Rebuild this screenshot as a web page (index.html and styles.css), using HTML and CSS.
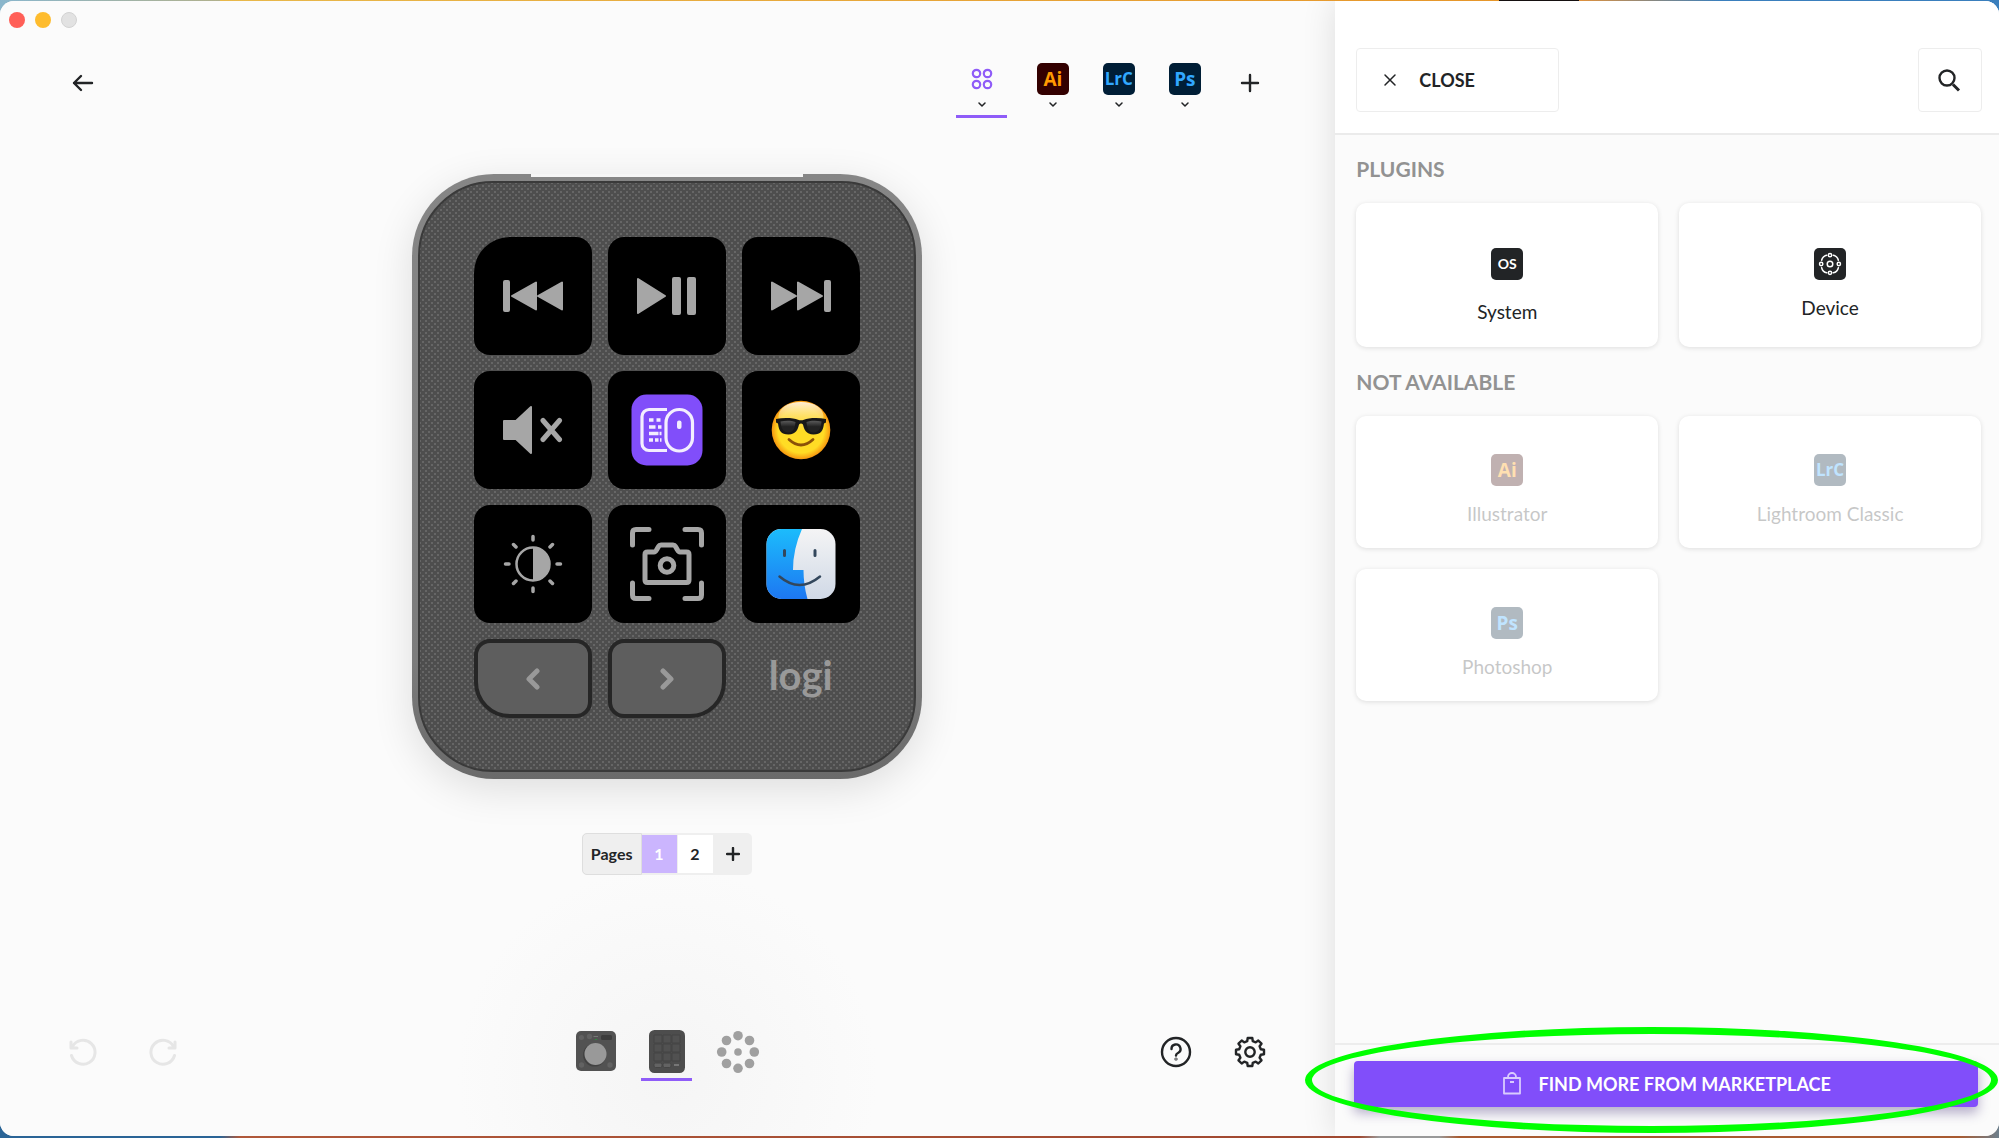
FILE: index.html
```
<!DOCTYPE html>
<html lang="en">
  <head>
    <meta charset="UTF-8" />
    <meta name="viewport" content="width=device-width, initial-scale=1.0" />
    <title>Logi Options+</title>
    <link rel="stylesheet" href="styles.css">
  </head>
  <body>
    <div class="window">
      <main class="main">
        <div class="titlebar">
          <button class="light red" aria-label="Close window"></button>
          <button class="light yellow" aria-label="Minimize window"></button>
          <button class="light grey" aria-label="Zoom window" disabled></button>
        </div>

        <div class="topbar">
          <button class="icon-btn" aria-label="Back">
            <svg width="22" height="18" viewBox="0 0 22 18" class="line"><path d="M20 9H2M9 2L2 9l7 7" /></svg>
          </button>
          <nav class="tabs">
            <button class="tab active" aria-label="All apps">
              <span class="tab-icon">
                <svg width="22" height="22" viewBox="0 0 22 22" class="line purple"><circle cx="5.5" cy="5.5" r="3.7" /><circle cx="16.5" cy="5.5" r="3.7" /><circle cx="5.5" cy="16.5" r="3.7" /><circle cx="16.5" cy="16.5" r="3.7" /></svg>
              </span>
              <svg width="8" height="6" viewBox="0 0 8 6" class="line thin"><path d="M1 1l3 3 3-3" /></svg>
            </button>
            <button class="tab">
              <span class="app ai">Ai</span>
              <svg width="8" height="6" viewBox="0 0 8 6" class="line thin"><path d="M1 1l3 3 3-3" /></svg>
            </button>
            <button class="tab">
              <span class="app lrc">LrC</span>
              <svg width="8" height="6" viewBox="0 0 8 6" class="line thin"><path d="M1 1l3 3 3-3" /></svg>
            </button>
            <button class="tab">
              <span class="app ps">Ps</span>
              <svg width="8" height="6" viewBox="0 0 8 6" class="line thin"><path d="M1 1l3 3 3-3" /></svg>
            </button>
            <button class="icon-btn add" aria-label="Add app">
              <svg width="20" height="20" viewBox="0 0 20 20" class="line"><path d="M10 2v16M2 10h16" /></svg>
            </button>
          </nav>
        </div>

        <div class="device">
          <div class="keypad">
            <button class="key top-left" aria-label="Previous track">
              <svg width="60" height="60" viewBox="-30 -30 60 60" class="media"><rect x="-29" y="-15" width="5" height="30" rx="1" /><path d="M-21 0L3-13.5v27zM5 0l24-13.5v27z" /></svg>
            </button>
            <button class="key" aria-label="Play / pause">
              <svg width="60" height="60" viewBox="-30 -30 60 60" class="media"><path d="M-29-17L-2 0l-27 17z" /><rect x="6" y="-18" width="7" height="36" rx="1" /><rect x="21" y="-18" width="7" height="36" rx="1" /></svg>
            </button>
            <button class="key top-right" aria-label="Next track">
              <svg width="60" height="60" viewBox="-30 -30 60 60" class="media"><rect x="24" y="-15" width="5" height="30" rx="1" /><path d="M21 0L-3-13.5v27zM-5 0l-24-13.5v27z" /></svg>
            </button>

            <button class="key" aria-label="Mute">
              <svg width="60" height="60" viewBox="-30 -30 60 60" class="media"><path d="M-29-9h12L-2-23v46L-17 9h-12z" /><path class="cross" d="M10-9.5l16.500 19M26.500-9.500L10 9.500" /></svg>
            </button>
            <button class="key" aria-label="Logi Options+">
              <svg width="72" height="72" viewBox="-36 -36 72 72">
                <rect x="-35.5" y="-35.5" width="71" height="71" rx="15" fill="#814efa" />
                <g fill="none" stroke="#f3eefe" stroke-width="3.2">
                  <path d="M0-20.5h-18a7 7 0 0 0-7 7v27a7 7 0 0 0 7 7H0" />
                  <rect x="-1" y="-20.5" width="26.5" height="41.5" rx="13.2" />
                </g>
                <path stroke="#f3eefe" stroke-width="3.5" d="M-18-10h4.500M-10.500-10h4M-18-3h6.500M-9-3h3.500M-18 3.500h9.500M-7.500 3.500h2M-18 10h4M-12 10h3.500M-7 10h1.500" />
                <rect x="10" y="-9.5" width="4.5" height="8.5" rx="2" fill="#f3eefe" />
              </svg>
            </button>
            <button class="key" aria-label="Emoji">
              <svg width="60" height="60" viewBox="-30 -30 60 60">
                <defs>
                  <radialGradient id="face" cx="50%" cy="50%" r="50%"><stop offset="0.78" stop-color="#ffdc25" /><stop offset="1" stop-color="#f6960f" /></radialGradient>
                  <linearGradient id="shine" x1="0" y1="0" x2="0" y2="1"><stop offset="0" stop-color="#fff0d8" /><stop offset="1" stop-color="#fed84a" stop-opacity="0.2" /></linearGradient>
                  <linearGradient id="glass" x1="0" y1="0" x2="0" y2="1"><stop offset="0" stop-color="#595959" /><stop offset="0.5" stop-color="#222" /></linearGradient>
                </defs>
                <circle r="29.3" fill="url(#face)" />
                <ellipse cy="-14" rx="22.5" ry="14" fill="url(#shine)" />
                <path fill="#181818" d="M-25-11c8-1.500 18-1 22 .8q3 1 6 0c4-1.800 14-2.300 22-.8v3.500l-2 1C22 1 20 4.500 12.500 4.500 5 4.500 3-1 2-5.500q-2-2-4 0C-3-1-5 4.500-12.500 4.500-20 4.500-22 1-23-6.500l-2-1z" />
                <path fill="url(#glass)" d="M-20.500-8.500c5-1 11-1 15 .5C-6-2-8 2.500-12.500 2.500S-20-1-20.500-8.500zM20.500-8.500c-5-1-11-1-15 .5C6-2 8 2.500 12.500 2.500S20-1 20.500-8.500z" />
                <path fill="none" stroke="#8a5108" stroke-width="2.8" stroke-linecap="round" d="M-12 9.500Q0 20.500 12 9.500" />
              </svg>
            </button>

            <button class="key" aria-label="Brightness">
              <svg width="60" height="60" viewBox="-30 -30 60 60">
                <circle r="16.5" fill="none" stroke="#a6a6a6" stroke-width="2.5" />
                <path fill="#a6a6a6" d="M0-17a17 17 0 0 1 0 34z" />
                <path stroke="#a6a6a6" stroke-width="3.5" stroke-linecap="round" d="M0-24v-3.500M0 24v3.500M-24 0h-3.500M24 0h3.500M-17-17l-2.500-2.500M17-17l2.500-2.500M-17 17l-2.500 2.500M17 17l2.500 2.500" />
              </svg>
            </button>
            <button class="key" aria-label="Screenshot">
              <svg width="76" height="76" viewBox="-38 -38 76 76" fill="none" stroke="#a6a6a6" stroke-width="5" stroke-linecap="round" stroke-linejoin="round">
                <path d="M-34.500-19v-12q0-3.500 3.500-3.500h13M34.500-19v-12q0-3.500-3.500-3.500h-13M-34.500 19v12q0 3.500 3.500 3.500h13M34.500 19v12q0 3.500-3.500 3.500h-13" />
                <path d="M-22-9.500q0-2.500 2.500-2.500h6.500q1.500 0 2.500-2l2-3.500q.8-1.500 2.500-1.500H6q1.700 0 2.500 1.500l2 3.500q1 2 2.500 2h6.500q2.500 0 2.500 2.500V16q0 2.500-2.500 2.500h-39Q-22 18.500-22 16z" />
                <circle cy="1.5" r="6.8" />
              </svg>
            </button>
            <button class="key" aria-label="Finder">
              <svg width="70" height="70" viewBox="0 0 70 70">
                <defs>
                  <linearGradient id="blue" x1="0" y1="0" x2="0" y2="1"><stop offset="0" stop-color="#1cbcfc" /><stop offset="1" stop-color="#1d77f2" /></linearGradient>
                  <linearGradient id="silver" x1="0" y1="0" x2="0" y2="1"><stop offset="0" stop-color="#f4f4f5" /><stop offset="1" stop-color="#d0d9e6" /></linearGradient>
                  <clipPath id="tile"><rect x="0.5" width="69" height="70" rx="15" /></clipPath>
                </defs>
                <g clip-path="url(#tile)">
                  <rect width="70" height="70" fill="url(#silver)" />
                  <path fill="url(#blue)" d="M0 0h36Q27 20 27 41h10.500q0 15 4 29H0z" />
                </g>
                <g fill="none" stroke="#33475c" stroke-linecap="round">
                  <path stroke-width="3" d="M18.500 21.500v5M49 21.500v5" />
                  <path stroke-width="2.5" d="M13.500 47.500q20 17 40.500 0" />
                </g>
              </svg>
            </button>

            <button class="nav-key prev" aria-label="Previous page">
              <svg width="16" height="22" viewBox="0 0 16 22"><path d="M12 3l-8 8 8 8" /></svg>
            </button>
            <button class="nav-key next" aria-label="Next page">
              <svg width="16" height="22" viewBox="0 0 16 22"><path d="M4 3l8 8-8 8" /></svg>
            </button>
            <div class="logo">logi</div>
          </div>
        </div>

        <div class="pages">
          <span class="pages-label">Pages</span>
          <button class="page current">1</button>
          <button class="page">2</button>
          <button class="page-add" aria-label="Add page">
            <svg width="14" height="14" viewBox="0 0 14 14" class="line"><path d="M7 1v12M1 7h12" /></svg>
          </button>
        </div>

        <div class="bottombar">
          <div class="history">
            <button class="icon-btn" aria-label="Undo" disabled>
              <svg width="30" height="30" viewBox="0 0 30 30" class="line faded"><path d="M3.500 18.500A12 12 0 1 0 4.500 9.500M3 5v6h6" /></svg>
            </button>
            <button class="icon-btn" aria-label="Redo" disabled>
              <svg width="30" height="30" viewBox="0 0 30 30" class="line faded"><path d="M26.500 18.500A12 12 0 1 1 25.500 9.500M27 5v6h-6" /></svg>
            </button>
          </div>
          <div class="devices">
            <button class="device-tab" aria-label="Dialpad">
              <svg width="42" height="42" viewBox="0 0 42 42">
                <rect x="1" y="1" width="40" height="40" rx="5" fill="#525252" />
                <g fill="#626262"><circle cx="6.5" cy="7.5" r="2.5" /><circle cx="14.5" cy="6.5" r="2.7" /><circle cx="6.5" cy="35" r="2.7" /><circle cx="35" cy="35" r="2.7" /></g>
                <rect x="26" y="5" width="11" height="5" rx="1.5" fill="#3c3c3c" />
                <path stroke="#777" d="M18.500 6.500h4.500" /><path stroke="#2f8a3c" d="M20 9.500h2" />
                <circle cx="19.5" cy="25" r="11.5" fill="#424242" />
                <circle cx="20.5" cy="24" r="11" fill="#999" />
              </svg>
            </button>
            <button class="device-tab active" aria-label="Keypad">
              <svg width="36" height="43" viewBox="0 0 36 43">
                <rect width="36" height="43" rx="5.5" fill="#4d4d4d" />
                <g fill="#515151" stroke="#454545">
                  <path d="M5 5h8v8H5zM14 5h8v8h-8zM23 5h8v8h-8zM5 14h8v8H5zM14 14h8v8h-8zM23 14h8v8h-8zM5 23h8v8H5zM14 23h8v8h-8zM23 23h8v8h-8z" />
                  <rect x="5" y="33" width="8" height="4.5" rx="1.5" fill="#636363" /><rect x="14" y="33" width="8" height="4.5" rx="1.5" fill="#636363" />
                </g>
                <path stroke="#858585" stroke-width="1.5" d="M25 35h5" />
              </svg>
            </button>
            <button class="device-tab" aria-label="Actions ring">
              <svg width="44" height="44" viewBox="-22 -22 44 44" fill="#a0a0a0"><circle r="3.8" /><circle cy="-16.3" r="4.8" /><circle cy="16.3" r="4.8" /><circle cx="-16.3" r="4.8" /><circle cx="16.3" r="4.8" /><circle cx="-11.5" cy="-11.5" r="4.8" /><circle cx="11.5" cy="-11.5" r="4.8" /><circle cx="-11.5" cy="11.5" r="4.8" /><circle cx="11.5" cy="11.5" r="4.8" /></svg>
            </button>
          </div>
          <div class="tools">
            <button class="icon-btn" aria-label="Help">
              <svg width="32" height="32" viewBox="0 0 32 32" class="line"><circle cx="16" cy="16" r="14" /><path d="M11.500 13a4.500 4.500 0 1 1 6.800 3.800Q16 18 16 19.500" /><circle cx="16" cy="23" r="0.4" /></svg>
            </button>
            <button class="icon-btn" aria-label="Settings">
              <svg width="32" height="32" viewBox="-16 -16 32 32" class="line"><path d="M-2.300-14H2.300L2.800-10.800 5.700-9.600 8.300-11.500 11.500-8.300 9.600-5.700 10.800-2.800 14-2.300V2.300L10.800 2.800 9.600 5.700 11.500 8.300 8.300 11.500 5.700 9.600 2.800 10.800 2.300 14H-2.300L-2.800 10.800-5.700 9.600-8.300 11.500-11.500 8.300-9.600 5.700-10.800 2.800-14 2.300V-2.300L-10.800-2.800-9.600-5.700-11.500-8.300-8.300-11.500-5.700-9.600-2.800-10.800z" /><circle r="4.7" /></svg>
            </button>
          </div>
        </div>
      </main>

      <aside class="panel">
        <div class="panel-header">
          <button class="close-btn">
            <svg width="14" height="14" viewBox="0 0 14 14" class="line thin"><path d="M2 2l10 10M12 2L2 12" /></svg>
            CLOSE
          </button>
          <button class="search-btn" aria-label="Search">
            <svg width="26" height="26" viewBox="0 0 26 26" class="line"><circle cx="10" cy="11" r="7.5" /><path stroke-width="3" stroke-linecap="butt" d="M16 17.500l6 6" /></svg>
          </button>
        </div>

        <div class="panel-body">
          <h2>PLUGINS</h2>
          <div class="cards tall">
            <button class="card system">
              <span class="app dark">OS</span>
              System
            </button>
            <button class="card">
              <span class="app dark">
                <svg width="26" height="26" viewBox="-14 -14 28 28" class="line light-line"><circle r="3" /><circle cy="-9.5" r="1.8" /><circle cy="9.5" r="1.8" /><circle cx="-9.5" r="1.8" /><circle cx="9.5" r="1.8" /><path d="M3.500-9.500q4.500 1 5.500 5.500M9 4q-1 4.500-5.500 5.500M-3.500 9.500q-4.500-1-5.500-5.500M-9-4q1-4.500 5.500-5.500" /></svg>
              </span>
              Device
            </button>
          </div>

          <h2>NOT AVAILABLE</h2>
          <div class="cards">
            <button class="card" disabled>
              <span class="app ai">Ai</span>
              <span class="name">Illustrator</span>
            </button>
            <button class="card" disabled>
              <span class="app lrc">LrC</span>
              <span class="name">Lightroom Classic</span>
            </button>
            <button class="card" disabled>
              <span class="app ps">Ps</span>
              <span class="name">Photoshop</span>
            </button>
          </div>
        </div>

        <div class="panel-footer">
          <button class="market-btn">
            <svg width="20" height="24" viewBox="0 0 20 24"><path d="M2 6h16v15.500H2zM6 6V5a4 4 0 0 1 8 0v1M8 10h4" /></svg>
            FIND MORE FROM MARKETPLACE
          </button>
          <div class="highlight"></div>
        </div>
      </aside>
    </div>
  </body>
</html>
```
FILE: styles.css
```
* {
  margin: 0;
  padding: 0;
  box-sizing: border-box;
}

body {
  height: 100vh;
  padding: 1px 0 2px;
  font-family: Lato, "Open Sans", sans-serif;
  font-size: 18px;
  line-height: 24px;
  color: #222426;
  /* desktop showing around the window */
  background:
    linear-gradient(90deg, #8ab6cc, #b0b08c 11%, #e8b84a 11%, #e6962a 75%, #151010 75%, #151010 79%, #e0913c 79%, #3a7fbd 86%) top / 100% 50% no-repeat,
    linear-gradient(90deg, #2a6496 11%, #b0583a 12%, #a04830 68%, #999 69%, #999 72%, #a85a30 73%, #a85a30 98%, #6d7f8c) bottom / 100% 50% no-repeat;
}

button {
  border: none;
  background: none;
  font: inherit;
  color: inherit;
  cursor: pointer;
}

.window {
  display: flex;
  height: 100%;
  border-radius: 14px;
  background: #fbfbfb;
  overflow: hidden;
}

.line {
  fill: none;
  stroke: #222426;
  stroke-width: 2.4;
  stroke-linecap: round;
  stroke-linejoin: round;
}

.line.thin {
  stroke-width: 1.5;
}

.line.purple {
  stroke: #8f5cf8;
  stroke-width: 2.2;
}

.line.faded {
  stroke: #e6e6e6;
  stroke-width: 3;
}

.line.light-line {
  stroke: #fff;
  stroke-width: 1.6;
}

/* left side */

.main {
  flex: 1;
  display: flex;
  flex-direction: column;
  padding-right: 2px;
  background: radial-gradient(circle 210px at 50% calc(100% - 60px), #f5f5f5, #fbfbfb);
}

.titlebar {
  display: flex;
  gap: 10px;
  padding: 11px 9px 0;
}

.light {
  width: 16px;
  height: 16px;
  border-radius: 50%;
}

.red {
  background: #ff5f57;
}

.yellow {
  background: #febc2e;
}

.grey {
  background: #e2e2e2;
  border: 1px solid #d2d2d2;
}

.topbar {
  display: flex;
  justify-content: space-between;
  align-items: flex-start;
  padding: 35px 63px 0;
}

.icon-btn {
  display: flex;
  align-items: center;
  justify-content: center;
  width: 40px;
  height: 40px;
}

.tabs {
  display: flex;
  gap: 15px;
}

.tab {
  display: flex;
  flex-direction: column;
  align-items: center;
  gap: 7px;
  width: 51px;
  height: 55px;
  border-bottom: 3px solid transparent;
}

.tab.active {
  margin-right: 5px;
  border-color: #8f5cf8;
}

.tab-icon,
.app {
  display: flex;
  align-items: center;
  justify-content: center;
  width: 32px;
  height: 32px;
}

.add {
  margin-left: 5px;
}

.app {
  border-radius: 5px;
  font-family: "Open Sans", sans-serif;
  font-size: 19px;
  font-weight: bold;
}

.ai {
  background: #330000;
  color: #ff9a00;
}

.lrc {
  font-size: 17px;
}

.lrc,
.ps {
  background: #001e36;
  color: #31a8ff;
}

.dark {
  background: #222426;
  color: #fff;
  font-family: Lato, sans-serif;
  font-size: 14px;
}

/* keypad */

.device {
  position: relative;
  align-self: center;
  margin-top: 56px;
  padding: 7px 6px;
  border-radius: 82px;
  background: linear-gradient(#868686, #7c7c7c 80%, #6a6a6a);
  box-shadow: 0 10px 40px rgba(0, 0, 0, 0.12);
}

/* gap between the two raised edges on top */
.device::before {
  content: "";
  position: absolute;
  top: 0;
  left: 119px;
  right: 119px;
  height: 3px;
  background: #f6f6f6;
}

.keypad {
  display: grid;
  grid-template-columns: repeat(3, 118px);
  gap: 16px;
  padding: 54px 54px 52px;
  border: 2px solid #3a3a3a;
  border-radius: 75px;
  background:
    radial-gradient(circle, #666 1px, transparent 1px) 0 0 / 6px 6px,
    radial-gradient(circle, #666 1px, transparent 1px) 3px 3px / 6px 6px,
    #4e4e4e;
}

.key,
.nav-key {
  display: flex;
  align-items: center;
  justify-content: center;
  height: 118px;
  border-radius: 16px;
  background: #000;
}

.media {
  fill: #a6a6a6;
  stroke: #a6a6a6;
  stroke-width: 2;
  stroke-linejoin: round;
}

.cross {
  stroke-width: 5;
  stroke-linecap: round;
}

.top-left {
  border-top-left-radius: 36px;
}

.top-right {
  border-top-right-radius: 36px;
}

.nav-key {
  height: 79px;
  border: 4px solid #262626;
  background: #5e5e5e;
}

.nav-key path {
  fill: none;
  stroke: #999;
  stroke-width: 5;
  stroke-linecap: round;
  stroke-linejoin: round;
}

.prev {
  border-bottom-left-radius: 36px;
}

.next {
  border-bottom-right-radius: 36px;
}

.logo {
  text-align: center;
  font-size: 40px;
  font-weight: bold;
  line-height: 72px;
  color: #999;
}

.pages {
  display: flex;
  align-self: center;
  align-items: center;
  margin-top: 54px;
  height: 42px;
  border-radius: 5px;
  background: #efefef;
  font-size: 16px;
  font-weight: bold;
}

.pages-label {
  padding: 0 8px;
  border: 1px solid #dedede;
  border-radius: 5px 0 0 5px;
  line-height: 40px;
}

.page {
  width: 36px;
  height: 38px;
  border-right: 1px solid #efefef;
  background: #fff;
}

.page.current {
  background: #cbb5fe;
  color: #fff;
}

.page-add {
  display: flex;
  justify-content: center;
  width: 38px;
}

.bottombar {
  display: grid;
  grid-template-columns: 1fr auto 1fr;
  align-items: start;
  margin-top: auto;
  padding: 0 63px 55px;
}

.history {
  display: flex;
  gap: 40px;
}

.tools {
  display: flex;
  justify-content: flex-end;
  gap: 34px;
}

.history .icon-btn,
.tools .icon-btn {
  height: 44px;
}

.devices {
  display: flex;
  gap: 20px;
}

.device-tab {
  display: flex;
  justify-content: center;
  align-items: flex-start;
  width: 51px;
  height: 51px;
  border-bottom: 3px solid transparent;
}

.device-tab.active {
  border-color: #8f5cf8;
}

/* right panel */

.panel {
  display: flex;
  flex-direction: column;
  width: 33.2%;
  background: #fbfbfb;
  box-shadow: 0 0 32px rgba(0, 0, 0, 0.12);
}

.panel-header {
  display: flex;
  justify-content: space-between;
  padding: 47px 17px 21px 21px;
  border-bottom: 2px solid #ebebeb;
  background: #fff;
}

.close-btn,
.search-btn {
  display: flex;
  align-items: center;
  height: 64px;
  border: 1px solid #ededed;
  border-radius: 4px;
  background: #fff;
}

.close-btn {
  gap: 22px;
  width: 203px;
  padding-left: 26px;
  font-weight: bold;
}

.search-btn {
  justify-content: center;
  width: 64px;
}

.panel-body {
  flex: 1;
  padding: 0 18px 0 21px;
}

h2 {
  margin: 22px 0;
  font-size: 21px;
  line-height: 24px;
  color: #929292;
}

.cards {
  display: grid;
  grid-template-columns: 1fr 1fr;
  gap: 21px;
}

.cards.tall {
  margin-bottom: 23px;
}

.card {
  display: flex;
  flex-direction: column;
  align-items: center;
  justify-content: flex-start;
  gap: 16px;
  padding: 38px 0 22px;
  border-radius: 10px;
  background: #fff;
  box-shadow: 0 1px 5px rgba(0, 0, 0, 0.12);
  font-size: 19px;
}

.tall .card {
  padding: 45px 0 23px;
}

.card.system {
  gap: 20px;
}

.card:disabled {
  color: #222426;
}

.card:disabled .app {
  opacity: 0.3;
}

.card .name {
  opacity: 0.25;
}

.panel-footer {
  position: relative;
  padding: 16px 21px 29px 19px;
  border-top: 2px solid #ededed;
}

.market-btn {
  display: flex;
  align-items: center;
  justify-content: center;
  gap: 17px;
  width: 100%;
  height: 46px;
  border-radius: 4px;
  background: #814efa;
  box-shadow: 0 6px 12px rgba(50, 30, 110, 0.35);
  color: #fff;
  font-weight: bold;
}

.market-btn path {
  fill: none;
  stroke: #d9cbfe;
  stroke-width: 1.8;
  stroke-linejoin: round;
}

/* ring round the marketplace button */
.highlight {
  position: absolute;
  top: -18px;
  bottom: 3px;
  left: -30px;
  right: 1px;
  border: 7px solid #00ff00;
  border-radius: 50%;
  pointer-events: none;
}
```
